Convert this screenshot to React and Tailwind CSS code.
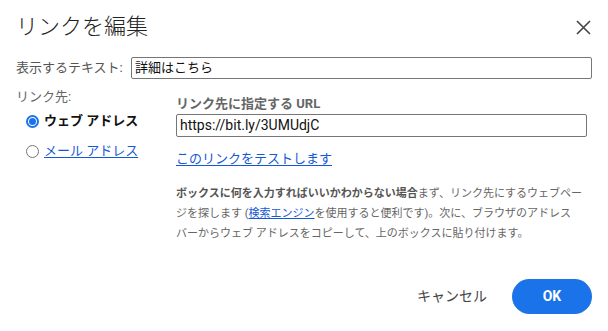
import React from "react";

export default function App() {
  return (
    <div className="w-[608px] h-[331px] bg-white flex flex-col px-4 pt-[13px] font-['Roboto','Noto_Sans_CJK_JP',sans-serif] text-[#222]">
      <div className="flex items-center justify-between">
        <h1 className="text-[22px] leading-[28px] font-light text-[#222]">リンクを編集</h1>
        <button className="w-[20px] h-[20px] flex items-center justify-center mr-[-1px]">
          <svg width="15" height="15" viewBox="0 0 15 15" fill="none">
            <path d="M1 1L14 14M14 1L1 14" stroke="#444" strokeWidth="1.6" />
          </svg>
        </button>
      </div>

      <div className="flex items-center mt-[16px]">
        <span className="w-[115px] text-[13px] leading-[20px] text-[#555] whitespace-nowrap">表示するテキスト:</span>
        <div className="flex-1 h-[22px] border border-[#767676] rounded-[2px] px-[3px] flex items-center text-[13px] text-[#111]">
          詳細はこちら
        </div>
      </div>

      <div className="flex mt-[8px]">
        <div className="w-[160px] flex flex-col">
          <span className="text-[13px] leading-[20px] text-[#666]">リンク先:</span>
          <label className="flex items-center h-5 mt-1 pl-[10px] gap-[5px]">
            <span className="w-[13px] h-[13px] rounded-full border-2 border-[#1a73e8] flex items-center justify-center">
              <span className="w-[7px] h-[7px] rounded-full bg-[#1a73e8]" />
            </span>
            <span className="text-[13px] font-bold text-[#111]">ウェブ アドレス</span>
          </label>
          <label className="flex items-center h-5 mt-[10px] pl-[10px] gap-[5px]">
            <span className="w-[13px] h-[13px] rounded-full border border-[#767676]" />
            <span className="text-[13px] text-[#1558d6] underline underline-offset-2">メール アドレス</span>
          </label>
        </div>

        <div className="flex-1 flex flex-col pr-[5px] mt-[7px]">
          <span className="text-[13px] leading-[20px] font-bold text-[#666]">リンク先に指定する URL</span>
          <div className="h-[23px] border border-[#767676] rounded-[2px] px-[3px] flex items-center text-[14px] text-[#111]">
            https://bit.ly/3UMUdjC
          </div>
          <a className="mt-[12px] text-[13px] leading-[20px] text-[#1558d6] underline underline-offset-2 self-start">
            このリンクをテストします
          </a>
          <p className="mt-[15px] text-[11px] leading-[20px] tracking-[0px] text-[#666] whitespace-nowrap">
            <span className="font-bold text-[#555]">ボックスに何を入力すればいいかわからない場合</span>まず、リンク先にするウェブペー
            <br />
            ジを探します (<a className="text-[#1558d6] underline">検索エンジン</a>を使用すると便利です)。次に、ブラウザのアドレス
            <br />
            バーからウェブ アドレスをコピーして、上のボックスに貼り付けます。
          </p>
        </div>
      </div>

      <div className="mt-auto pb-[17px] flex justify-end items-center gap-[9px]">
        <button className="px-4 h-[35px] text-[14px] text-[#444]">キャンセル</button>
        <button className="w-[80px] h-[35px] rounded-full bg-[#1a73e8] text-white font-bold text-[14px]">OK</button>
      </div>
    </div>
  );
}
